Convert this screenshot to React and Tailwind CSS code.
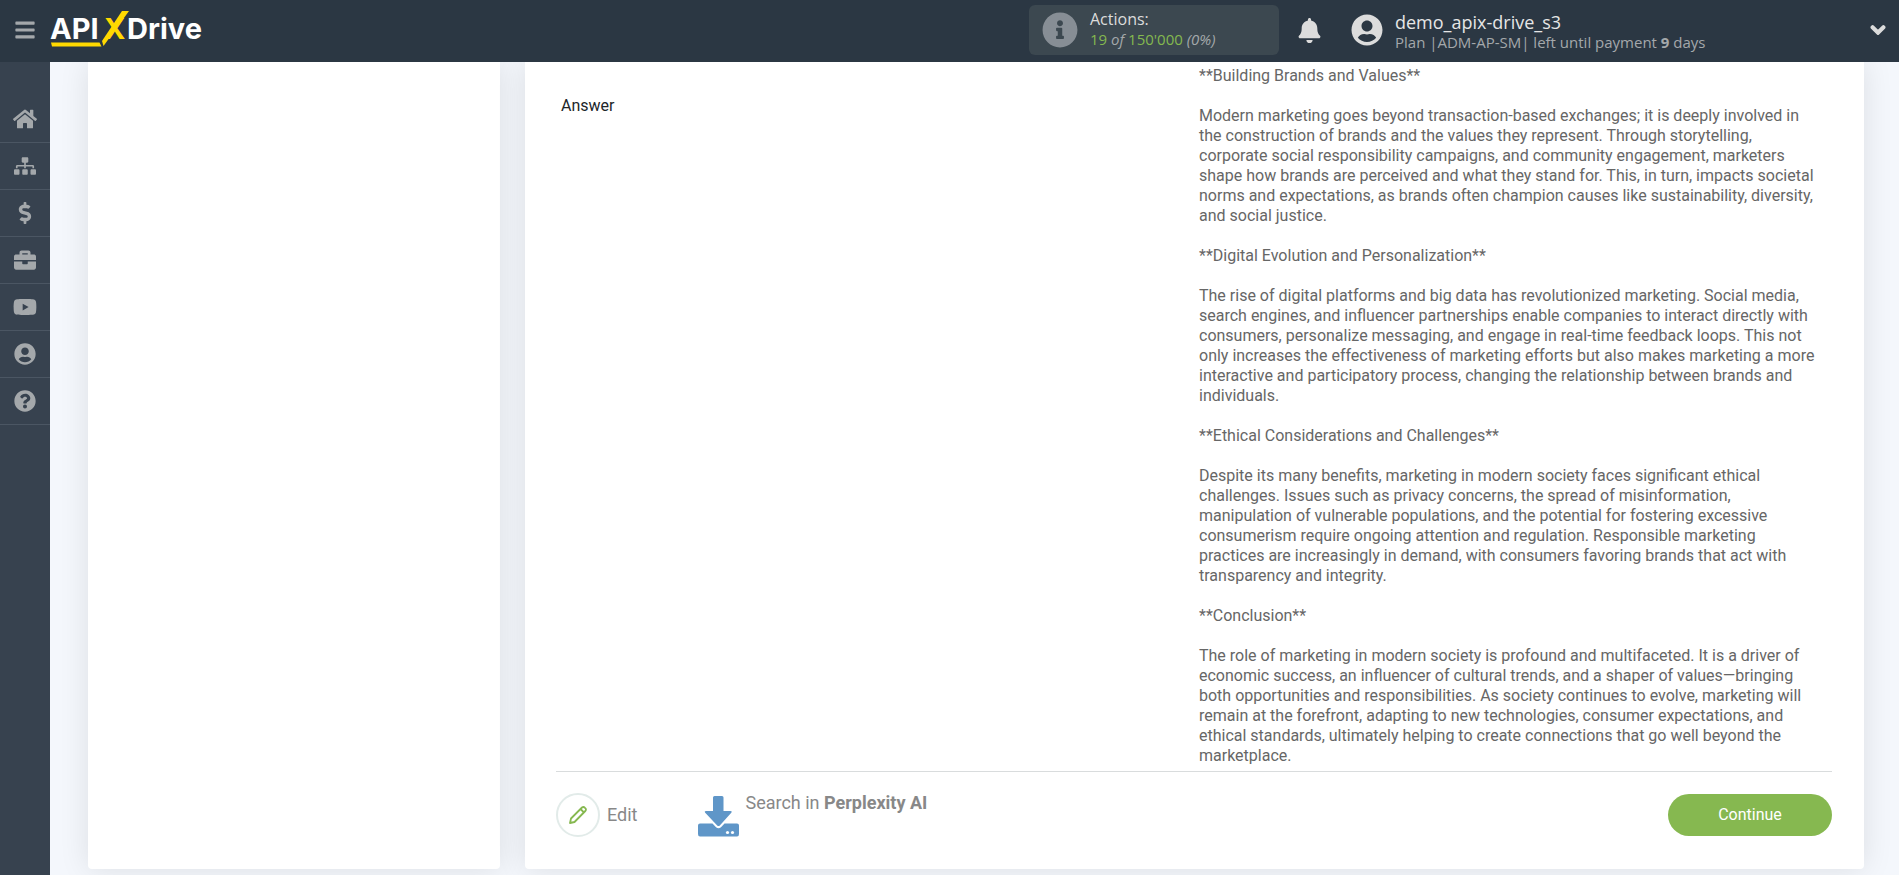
import React from "react";
import {
  FaBars,
  FaBell,
  FaBriefcase,
  FaChevronDown,
  FaDollarSign,
  FaHome,
  FaInfoCircle,
  FaQuestionCircle,
  FaSitemap,
  FaUserCircle,
  FaYoutube,
} from "react-icons/fa";

const navItems = [
  { label: "Home", icon: FaHome },
  { label: "Connections", icon: FaSitemap },
  { label: "Billing", icon: FaDollarSign },
  { label: "Services", icon: FaBriefcase },
  { label: "Video", icon: FaYoutube },
  { label: "Profile", icon: FaUserCircle },
  { label: "Help", icon: FaQuestionCircle },
];

const answer = `**Building Brands and Values**

Modern marketing goes beyond transaction-based exchanges; it is deeply involved in the construction of brands and the values they represent. Through storytelling, corporate social responsibility campaigns, and community engagement, marketers shape how brands are perceived and what they stand for. This, in turn, impacts societal norms and expectations, as brands often champion causes like sustainability, diversity, and social justice.

**Digital Evolution and Personalization**

The rise of digital platforms and big data has revolutionized marketing. Social media, search engines, and influencer partnerships enable companies to interact directly with consumers, personalize messaging, and engage in real-time feedback loops. This not only increases the effectiveness of marketing efforts but also makes marketing a more interactive and participatory process, changing the relationship between brands and individuals.

**Ethical Considerations and Challenges**

Despite its many benefits, marketing in modern society faces significant ethical challenges. Issues such as privacy concerns, the spread of misinformation, manipulation of vulnerable populations, and the potential for fostering excessive consumerism require ongoing attention and regulation. Responsible marketing practices are increasingly in demand, with consumers favoring brands that act with transparency and integrity.

**Conclusion**

The role of marketing in modern society is profound and multifaceted. It is a driver of economic success, an influencer of cultural trends, and a shaper of values—bringing both opportunities and responsibilities. As society continues to evolve, marketing will remain at the forefront, adapting to new technologies, consumer expectations, and ethical standards, ultimately helping to create connections that go well beyond the marketplace.`;

const Logo = () => {
  return (
    <svg
      width="156"
      height="40"
      viewBox="0 0 156 40"
      role="img"
      aria-label="APIXDrive"
      className="font-['Inter',sans-serif] text-[29px] font-bold"
    >
      <text x="0" y="29" fill="#fff">API</text>
      <text x="54" y="29" fill="#ffd900">X</text>
      <text x="77" y="29" fill="#fff">Drive</text>
      <path d="M72 1h7L53.500 36 52 31z" fill="#ffd900" />
      <path d="M1 32.500h48.500l2 4H2z" fill="#ffd900" />
    </svg>
  );
};

const Header = () => {
  return (
    <header className="flex h-[62px] items-center bg-[#2b3743] pb-[2px] font-['Open_Sans',sans-serif]">
      <button aria-label="Menu" className="flex w-[50px] justify-center text-[#a4a8ab]">
        <FaBars size={22} />
      </button>
      <a href="#">
        <Logo />
      </a>
      <div className="ml-auto flex h-[50px] w-[250px] items-center gap-3 rounded-md bg-[#3c4850] px-[13px]">
        <FaInfoCircle size={36} className="text-[#878e95]" />
        <div className="pb-[2px] text-base leading-5 text-[#dcdcdc]">
          <div>Actions:</div>
          <div className="text-[15px] text-[#84b84f]">
            19 <i className="text-[#a4a8ab]">of</i> 150'000{" "}
            <i className="text-[#a4a8ab]">(0%)</i>
          </div>
        </div>
      </div>
      <button aria-label="Notifications" className="ml-[18px] text-[#dcdcdc]">
        <FaBell size={25} />
      </button>
      <div className="ml-[29px] flex w-[548px] items-center text-[#dcdcdc]">
        <FaUserCircle size={32} />
        <div className="ml-3 pt-1">
          <div className="text-lg leading-5 text-[#e6e6e6]">demo_apix-drive_s3</div>
          <div className="text-[15px] leading-5 text-[#a4a8ab]">
            Plan |ADM-AP-SM| left until payment <b>9</b> days
          </div>
        </div>
        <button aria-label="Account menu" className="ml-auto mr-[13px]">
          <FaChevronDown size={16} stroke="currentColor" strokeWidth={50} />
        </button>
      </div>
    </header>
  );
};

const Sidebar = () => {
  return (
    <nav className="w-[50px] shrink-0 bg-[#37424f] pt-[34px]">
      {navItems.map(({ label, icon: Icon }) => (
        <a
          key={label}
          href="#"
          aria-label={label}
          className="flex h-[47px] items-center justify-center border-b border-[#4b5663] text-[#a4a8ab]"
        >
          <Icon size={label === "Home" || label === "Video" ? 24 : 22} />
        </a>
      ))}
    </nav>
  );
};

const DownloadIcon = () => {
  return (
    <svg width="41" height="41" viewBox="0 0 41 41" fill="#5f96c8">
      <path d="M15 1.500q0-1.500 1.500-1.500h7.500q1.500 0 1.500 1.500V15h7q2 .2.800 1.800L21.800 29.500q-1.300 1.200-2.600 0L7.200 16.800Q6 15.200 8 15h7z" />
      <path d="M2 27.500h12.500l3.500 3.700q2.500 2 5 0l3.500-3.700H39q2 0 2 2V38q0 2.500-2 2.500H2Q0 40.500 0 38v-8.500q0-2 2-2z" />
      <circle cx="29.500" cy="36.500" r="1.600" fill="#fff" />
      <circle cx="34.500" cy="36.500" r="1.600" fill="#fff" />
    </svg>
  );
};

const PencilIcon = () => {
  return (
    <svg
      width="20"
      height="20"
      viewBox="0 0 20 20"
      fill="none"
      stroke="#86b850"
      strokeWidth="1.800"
      strokeLinejoin="round"
    >
      <path d="M2 18l1-4.500L14 2.500q1.500-1.200 3 .3 1.800 1.700.3 3.200L6.500 17z" />
      <path d="M12.500 4l3.500 3.500" />
    </svg>
  );
};

export default function App() {
  return (
    <div className="flex min-h-screen flex-col bg-[#f4f7fc] font-['Roboto',sans-serif] text-base leading-5">
      <Header />
      <div className="flex flex-1">
        <Sidebar />
        <div className="flex flex-1 gap-[25px] overflow-hidden pb-[6px] pl-[38px] pr-[35px]">
          <aside className="w-[412px] shrink-0 rounded-b bg-white shadow-[0_0_30px_rgba(0,0,0,0.1)]" />
          <main className="flex-1 rounded-b bg-white pb-8 pl-[31px] pr-8 shadow-[0_0_30px_rgba(0,0,0,0.1)]">
            <table className="w-full table-fixed">
              <tbody>
                <tr className="border-b border-[#d9dcdd] align-top">
                  <th scope="row" className="px-[5px] pt-[34px] text-left font-normal text-[#212529]">
                    Answer
                  </th>
                  <td className="whitespace-pre-wrap pb-[5px] pl-[5px] pr-3 pt-1 text-[#666]">{answer}</td>
                </tr>
              </tbody>
            </table>
            <div className="mt-[21px] flex items-center text-lg leading-5 text-[#888]">
              <button className="flex items-center gap-[7px]">
                <span className="flex size-11 items-center justify-center rounded-full border-2 border-[#e2ebe9]">
                  <PencilIcon />
                </span>
                Edit
              </button>
              <a href="#" className="ml-[61px] flex gap-[6px]">
                <span className="pt-[3px]">
                  <DownloadIcon />
                </span>
                <span>
                  Search in <b>Perplexity AI</b>
                </span>
              </a>
              <button className="ml-auto h-[42px] w-[164px] rounded-full bg-[#86b850] text-base text-white">
                Continue
              </button>
            </div>
          </main>
        </div>
      </div>
    </div>
  );
}
